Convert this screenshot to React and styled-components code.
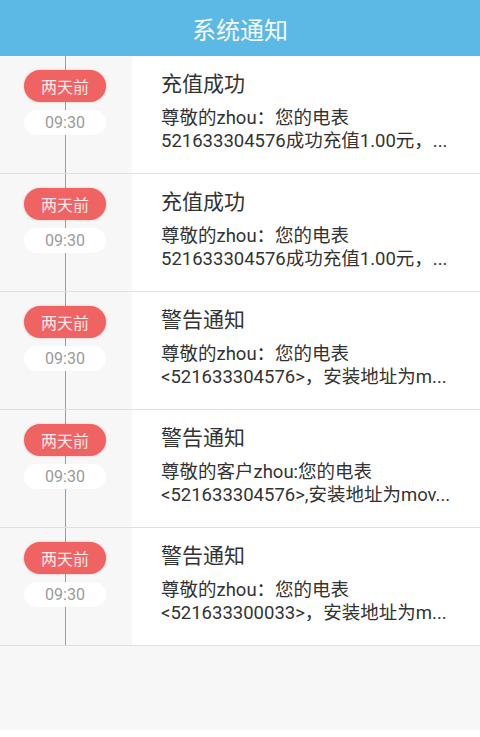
import React from 'react';
import styled, { createGlobalStyle } from 'styled-components';

const GlobalStyle = createGlobalStyle`
  html, body {
    margin: 0;
    padding: 0;
    background: #f7f7f7;
    font-family: Roboto, "Noto Sans CJK SC", sans-serif;
  }
`;

const Page = styled.div`
  min-height: 100vh;
  display: flex;
  flex-direction: column;
`;

const Header = styled.div`
  height: 56px;
  background: #5cb8e4;
  color: #f2f9fd;
  font-size: 24px;
  display: flex;
  align-items: center;
  justify-content: center;
  font-family: "Noto Sans CJK SC", sans-serif;
`;

const List = styled.div`
  display: flex;
  flex-direction: column;
`;

const Row = styled.div`
  display: flex;
  height: 117px;
  border-bottom: 1px solid #e0e0e0;
`;

// timeline column with the vertical line
const Side = styled.div`
  position: relative;
  width: 132px;
  background: #f7f7f7;
  display: flex;
  flex-direction: column;
  align-items: flex-start;
  padding-left: 24px;
  box-sizing: border-box;

  &::before {
    content: '';
    position: absolute;
    left: 65px;
    top: 0;
    bottom: 0;
    width: 1px;
    background: #9c9c9c;
  }
`;

const Pill = styled.div`
  position: relative;
  z-index: 1;
  width: 82px;
  height: ${(p) => (p.$red ? '32px' : '25px')};
  margin-top: ${(p) => (p.$red ? '14px' : '8px')};
  border-radius: 16px;
  background: ${(p) => (p.$red ? '#f06363' : '#ffffff')};
  color: ${(p) => (p.$red ? '#fde9e9' : '#9a9a9a')};
  font-size: 16px;
  display: flex;
  align-items: center;
  justify-content: center;
  box-shadow: ${(p) => (p.$red ? '0 0 2px rgba(240, 99, 99, 0.5)' : 'none')};
`;

const Content = styled.div`
  flex: 1;
  background: #fff;
  padding: 13px 0 0 29px;
  min-width: 0;
`;

const Title = styled.div`
  font-family: "Noto Sans CJK SC", sans-serif;
  font-size: 21px;
  line-height: 26px;
  color: #333;
`;

const Body = styled.div`
  margin-top: 12px;
  font-family: Roboto, "Noto Sans CJK SC", sans-serif;
  font-size: 18.5px;
  line-height: 23px;
  color: #333;
  white-space: nowrap;
`;

const Filler = styled.div`
  flex: 1;
  background: #f7f7f7;
`;

const BottomStrip = styled.div`
  height: 7px;
  background: #fff;
`;

const notices = [
  {
    title: '充值成功',
    lines: ['尊敬的zhou：您的电表', '521633304576成功充值1.00元，...'],
  },
  {
    title: '充值成功',
    lines: ['尊敬的zhou：您的电表', '521633304576成功充值1.00元，...'],
  },
  {
    title: '警告通知',
    lines: ['尊敬的zhou：您的电表', '<521633304576>，安装地址为m...'],
  },
  {
    title: '警告通知',
    lines: ['尊敬的客户zhou:您的电表', '<521633304576>,安装地址为mov...'],
  },
  {
    title: '警告通知',
    lines: ['尊敬的zhou：您的电表', '<521633300033>，安装地址为m...'],
  },
];

function App() {
  return (
    <Page>
      <GlobalStyle />
      <Header>系统通知</Header>
      <List>
        {notices.map((n, i) => (
          <Row key={i}>
            <Side>
              <Pill $red>两天前</Pill>
              <Pill>09:30</Pill>
            </Side>
            <Content>
              <Title>{n.title}</Title>
              <Body>
                {n.lines.map((l, j) => (
                  <div key={j}>{l}</div>
                ))}
              </Body>
            </Content>
          </Row>
        ))}
      </List>
      <Filler />
      <BottomStrip />
    </Page>
  );
}

export default App;
